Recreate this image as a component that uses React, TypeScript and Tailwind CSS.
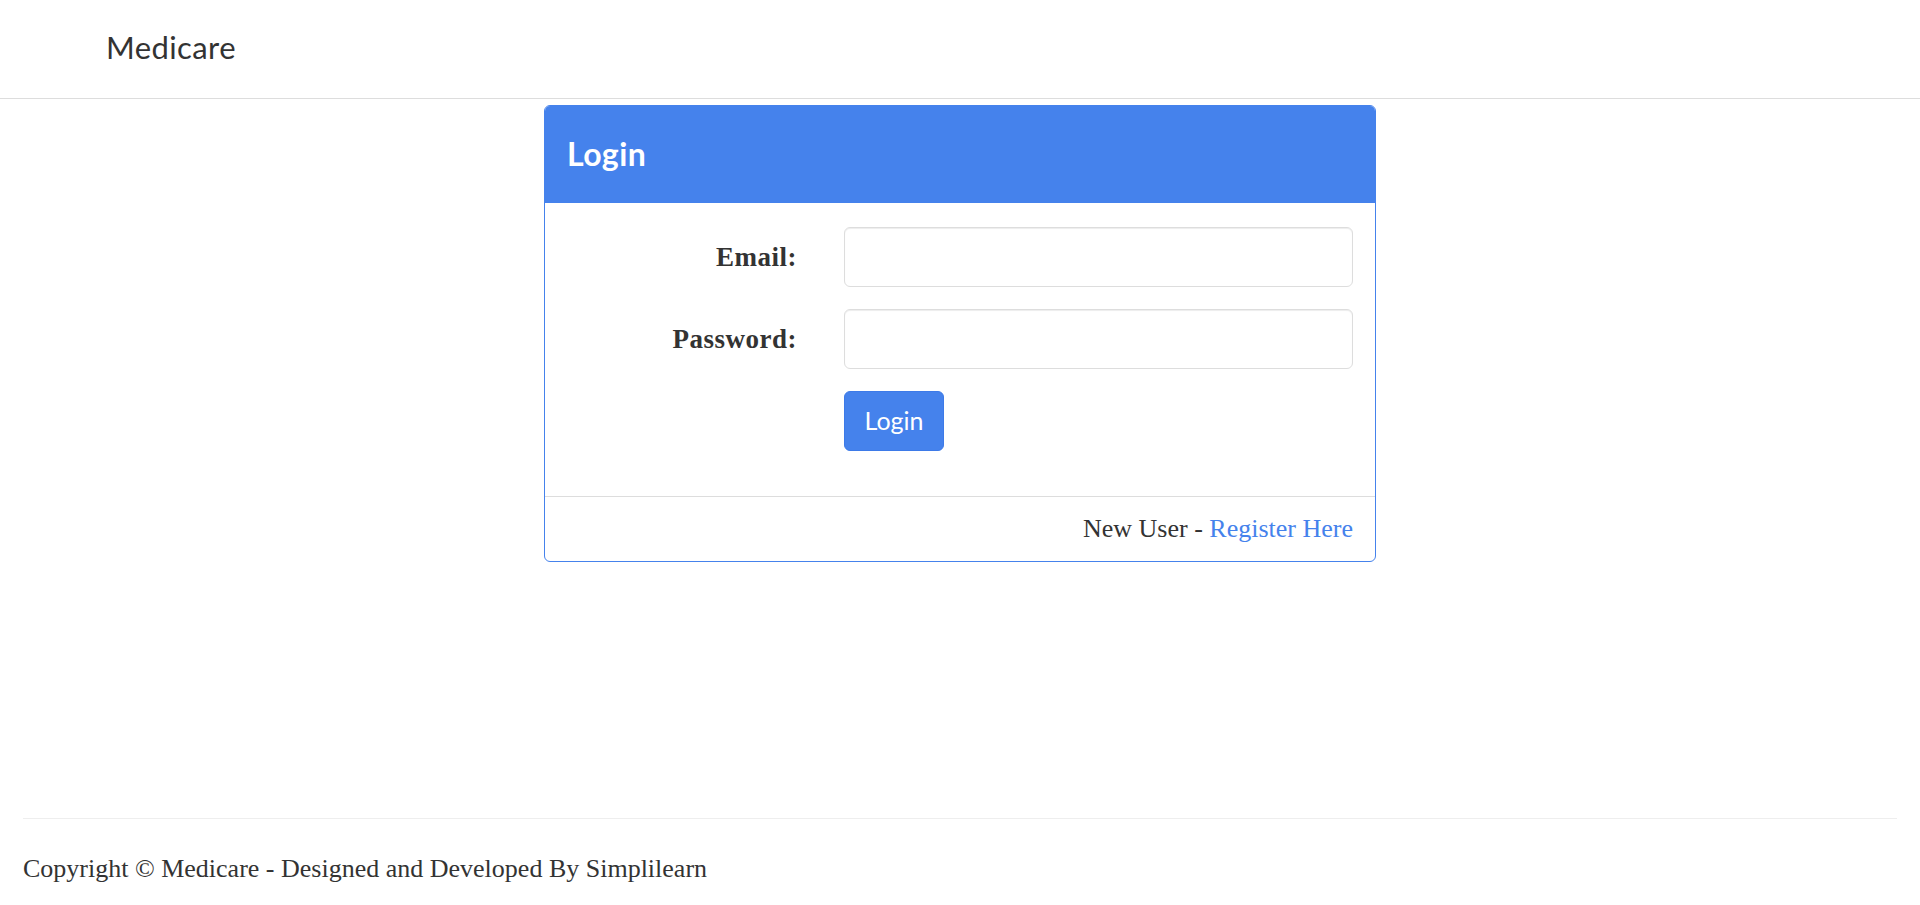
import React from 'react';

const serif = "font-['Liberation_Serif','DejaVu_Serif',serif]";
const sans = "font-['Lato','Open_Sans',sans-serif]";

function Navbar() {
  return (
    <nav className="h-[99px] border-b border-[#dddddd] bg-white">
      <div className="flex h-[98px] items-center pb-[4px] pl-[106px]">
        <a href="#" className={`${sans} text-[31px] leading-none tracking-[0.4px] text-[#333333]`}>
          Medicare
        </a>
      </div>
    </nav>
  );
}

function LoginCard() {
  return (
    <div className="mx-auto mt-[6px] w-[832px] rounded-[6px] border border-[#4582ec] bg-white">
      <div className="flex h-[97px] items-center rounded-t-[5px] bg-[#4582ec] px-[22px]">
        <h3 className={`${sans} pb-[2px] text-[32px] font-bold tracking-[0.4px] text-white`}>Login</h3>
      </div>

      <form className="px-[22px] pt-[24px] pb-[45px]">
        <div className="grid grid-cols-[230px_1fr] items-center gap-x-[47px] gap-y-[22px]">
          <label className={`${serif} text-right text-[27px] font-bold tracking-[0.5px] text-[#333333]`}>Email:</label>
          <input
            type="email"
            className="h-[60px] w-full rounded-[6px] border border-[#dddddd] px-[18px] text-[24px] shadow-[inset_0_1px_1px_rgba(0,0,0,0.075)] outline-none"
          />

          <label className={`${serif} text-right text-[27px] font-bold tracking-[0.5px] text-[#333333]`}>Password:</label>
          <input
            type="password"
            className="h-[60px] w-full rounded-[6px] border border-[#dddddd] px-[18px] text-[24px] shadow-[inset_0_1px_1px_rgba(0,0,0,0.075)] outline-none"
          />

          <div />
          <div>
            <button
              type="button"
              className={`${sans} h-[60px] w-[100px] rounded-[6px] border border-[#3d7ae8] bg-[#4582ec] text-[25px] text-white`}
            >
              Login
            </button>
          </div>
        </div>
      </form>

      <div className={`${serif} border-t border-[#dddddd] px-[22px] py-[14px] text-right text-[26px] leading-[36px] text-[#333333]`}>
        New User - <a href="#" className="text-[#4582ec]">Register Here</a>
      </div>
    </div>
  );
}

function Footer() {
  return (
    <footer className="mx-[23px] mt-[256px] border-t border-[#eeeeee] pt-[32px]">
      <p className={`${serif} text-[26px] leading-[36px] text-[#333333]`}>
        Copyright © Medicare - Designed and Developed By Simplilearn
      </p>
    </footer>
  );
}

export default function App() {
  return (
    <div className="min-h-screen bg-white">
      <Navbar />
      <LoginCard />
      <Footer />
    </div>
  );
}
